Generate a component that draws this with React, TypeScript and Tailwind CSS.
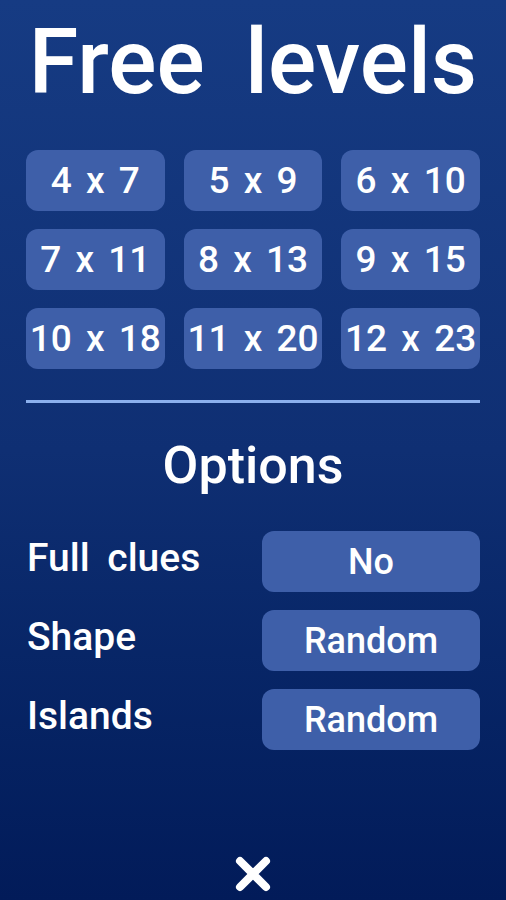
import React from "react";

const sizes = ["4 x 7", "5 x 9", "6 x 10", "7 x 11", "8 x 13", "9 x 15", "10 x 18", "11 x 20", "12 x 23"];
const options: [string, string][] = [
  ["Full clues", "No"],
  ["Shape", "Random"],
  ["Islands", "Random"],
];

export default function App() {
  return (
    <div
      className="w-[506px] h-[900px] flex flex-col items-stretch px-[26px] text-white bg-gradient-to-b from-[#163b83] via-[#0f2f73] to-[#021b59]"
      style={{ fontFamily: "Roboto, 'Noto Sans', sans-serif" }}
    >
      <h1 className="text-[90px] leading-none font-medium text-center mt-[18px] h-[100px] whitespace-nowrap [word-spacing:18px]">
        Free levels
      </h1>
      <div className="grid grid-cols-3 gap-x-[19px] gap-y-[18px] mt-[32px]">
        {sizes.map((s) => (
          <div
            key={s}
            className="h-[61px] rounded-[12px] bg-[#3e5fa9] flex items-center justify-center text-[37px] font-medium whitespace-pre [word-spacing:5px]"
          >
            {s}
          </div>
        ))}
      </div>
      <div className="h-[3px] bg-[#8bb0ee] mt-[31px]" />
      <div className="text-[52px] font-medium text-center leading-none mt-[37px] h-[58px]">Options</div>
      <div className="flex flex-col gap-[18px] mt-[33px]">
        {options.map(([l, v]) => (
          <div key={l} className="flex items-center h-[61px]">
            <div className="flex-1 text-[39px] font-medium leading-none pl-[1px] -mt-[6px] [word-spacing:8px]">
              {l}
            </div>
            <div className="w-[218px] h-[61px] rounded-[12px] bg-[#3e5fa9] flex items-center justify-center text-[36px] font-medium">
              {v}
            </div>
          </div>
        ))}
      </div>
      <div className="flex-1" />
      <div className="flex justify-center pb-[8px]">
        <svg width="36" height="36" viewBox="0 0 36 36">
          <path d="M5 5 L31 31 M31 5 L5 31" stroke="white" strokeWidth="8" strokeLinecap="round" />
        </svg>
      </div>
    </div>
  );
}
